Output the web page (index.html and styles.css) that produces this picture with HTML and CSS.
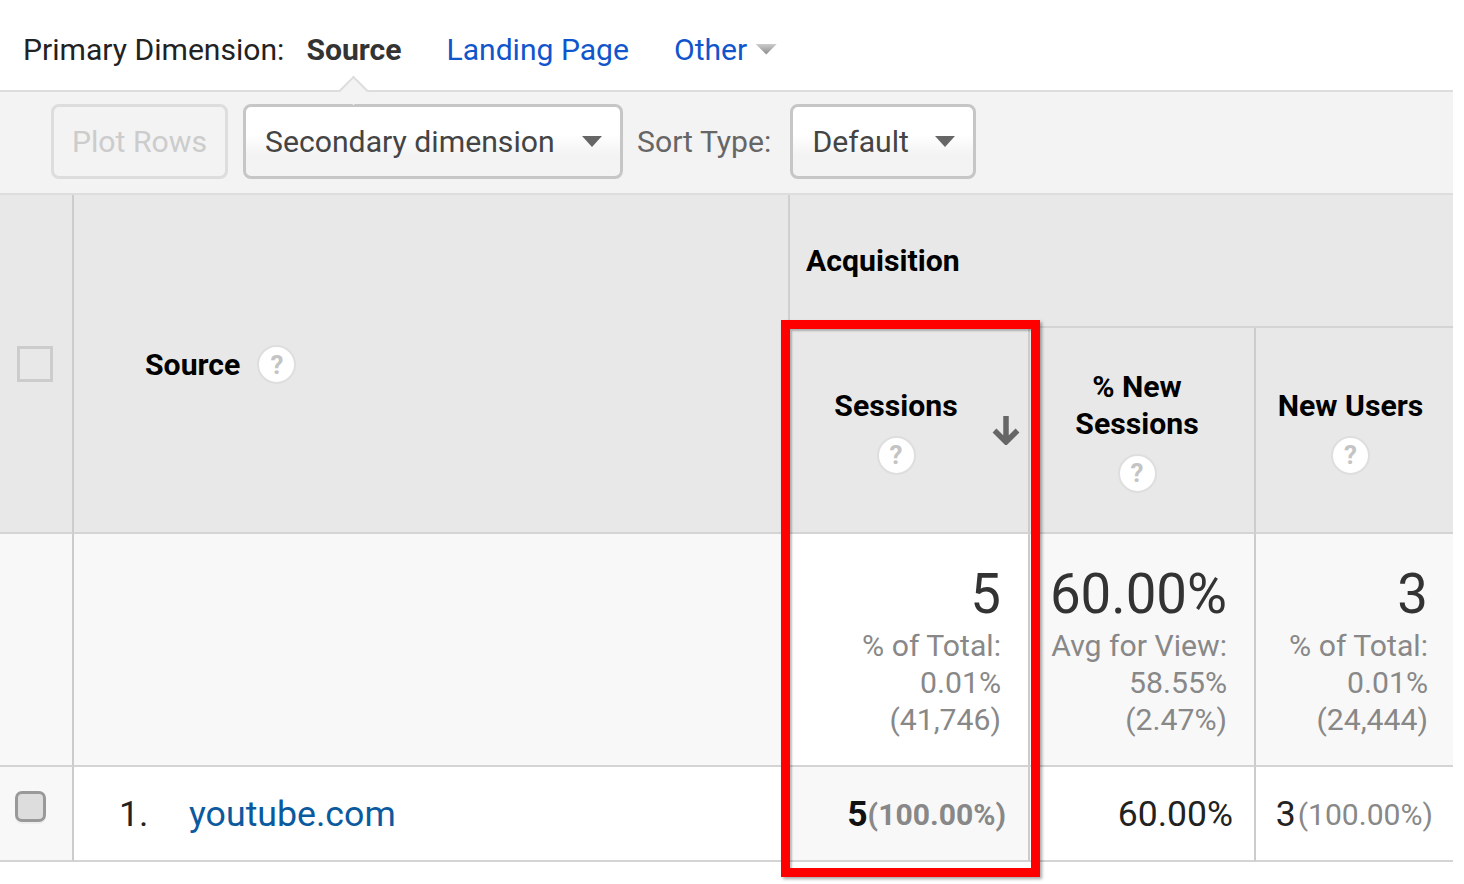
FILE: index.html
```html
<!DOCTYPE html>
<html lang="en">
<head>
<meta charset="utf-8">
<title>Primary Dimension: Source</title>
<link rel="stylesheet" href="styles.css">
</head>
<body>
<div class="report">
  <nav class="dims">
    <span class="dims-label">Primary Dimension:</span>
    <span class="dim-active">Source<i class="notch"></i></span>
    <a class="dim-link">Landing Page</a>
    <a class="dim-link">Other</a>
    <i class="caret-other"></i>
  </nav>
  <div class="toolbar">
    <button class="btn-disabled">Plot Rows</button>
    <div class="select select-wide"><span>Secondary dimension</span><i class="caret"></i></div>
    <span class="sort-label">Sort Type:</span>
    <div class="select select-sort"><span>Default</span><i class="caret"></i></div>
  </div>
  <div class="table">
    <div class="cell head check-head"><i class="check-empty"></i></div>
    <div class="cell head source-head"><span>Source</span><b class="help">?</b></div>
    <div class="cell head acq-head">Acquisition</div>
    <div class="cell head metric m-sessions">
      <span>Sessions</span><b class="help">?</b>
      <svg class="sort-arrow" viewBox="0 0 28 30" width="28" height="30"><path d="M14 1v25M2.500 15.500L14 27 25.500 15.500" fill="none" stroke="#666" stroke-width="5.500"/></svg>
    </div>
    <div class="cell head metric m-new"><span>% New<br>Sessions</span><b class="help">?</b></div>
    <div class="cell head metric m-users"><span>New Users</span><b class="help">?</b></div>

    <div class="cell sum sum-check"></div>
    <div class="cell sum sum-source"></div>
    <div class="cell sum sum-on"><div class="big">5</div><div class="sub">% of Total:<br>0.01%<br>(41,746)</div></div>
    <div class="cell sum sum-b"><div class="big">60.00%</div><div class="sub">Avg for View:<br>58.55%<br>(2.47%)</div></div>
    <div class="cell sum sum-c"><div class="big">3</div><div class="sub">% of Total:<br>0.01%<br>(24,444)</div></div>

    <div class="cell row row-check"><i class="check"></i></div>
    <div class="cell row row-source"><span class="num">1.</span><a class="site">youtube.com</a></div>
    <div class="cell row row-on"><b>5</b><span class="pct">(100.00%)</span></div>
    <div class="cell row row-b">60.00%</div>
    <div class="cell row row-c">3<span class="pct-light">(100.00%)</span></div>
  </div>
  <div class="highlight"></div>
</div>
</body>
</html>
```
FILE: styles.css
```css
* { box-sizing: border-box; }
html, body { margin: 0; background: #fff; }
body { font-family: Roboto, "Liberation Sans", sans-serif; color: #000; overflow: hidden; }
.report { position: relative; width: 1453px; height: 884px; }

.dims { height: 90px; display: flex; align-items: center; padding: 9px 0 0 23px; font-size: 30.100px; white-space: nowrap; }
.dims-label { color: #222; margin-right: 22px; }
.dim-active { position: relative; font-weight: 700; color: #333; margin-right: 45px; }
.dim-link { color: #1155cc; margin-right: 45px; }
.dim-link:last-of-type { margin-right: 8px; }
.notch { position: absolute; left: 37px; top: 48px; width: 21px; height: 21px; background: #f3f3f3; border: 2px solid #ddd; border-right: 0; border-bottom: 0; transform: rotate(45deg); z-index: 1; }
.caret-other { width: 22px; height: 11px; background: linear-gradient(#ccc, #888); clip-path: polygon(0 0, 100% 0, 50% 100%); margin-top: -1px; }

.toolbar { position: relative; height: 105px; background: #f3f3f3; border-top: 2px solid #ddd; border-bottom: 2px solid #ddd; display: flex; align-items: center; padding: 0 0 2px 51px; }
.btn-disabled { width: 177px; height: 75px; padding: 0; background: #f3f3f3; border: 3px solid #ddd; border-radius: 8px; font: 400 30.200px Roboto, sans-serif; color: #ccc; margin-right: 15px; }
.select { height: 75px; border: 3px solid #c6c6c6; border-radius: 8px; background: linear-gradient(#fff 0 40%, #f3f3f3 70%); display: flex; align-items: center; justify-content: space-between; font-size: 30.200px; color: #444; }
.select-wide { width: 380px; padding: 0 18px 0 19px; margin-right: 14px; }
.select-sort { width: 186px; padding: 0 18px 0 19px; }
.sort-label { font-size: 30.200px; color: #666; margin-right: 19px; }
.caret { width: 0; height: 0; border-left: 10px solid transparent; border-right: 10px solid transparent; border-top: 11px solid #666; }

.table { display: grid; grid-template-columns: 74px 716px 240px 226px 197px; grid-template-rows: 133px 206px 233px 95px; }
.cell { border-bottom: 2px solid #d4d4d4; border-right: 2px solid #ccc; }
.head { background: #e8e8e8; font-size: 30.200px; font-weight: 700; }
.check-head { grid-row: 1 / 3; display: flex; align-items: center; padding: 0 0 0 17px; }
.check-empty { display: block; width: 36px; height: 36px; border: 3px solid #ccc; }
.source-head { grid-row: 1 / 3; display: flex; align-items: center; gap: 17px; padding: 2px 0 0 71px; border-right-color: #d0d0d0; }
.acq-head { grid-column: 3 / 6; padding: 48px 0 0 16px; border-right: 0; }
.help { display: flex; flex: none; align-items: center; justify-content: center; width: 39px; height: 39px; border-radius: 50%; background: #fff; border: 2px solid #dedede; color: #c4c4c4; font-size: 26px; font-weight: 700; }
.metric { position: relative; display: flex; flex-direction: column; align-items: center; gap: 12px; text-align: center; line-height: 37px; }
.m-sessions { padding: 59px 26px 0 0; }
.m-new { padding: 40px 10px 0 0; }
.m-users { padding: 59px 8px 0 0; border-right: 0; }
.sort-arrow { position: absolute; right: 8px; top: 87px; }

.sum { background: #f8f8f8; text-align: right; padding: 27px 27px 0 0; }
.sum-on { background: #fff; }
.sum-c { border-right: 0; padding-right: 25px; }
.sum-check, .sum-source { padding: 0; }
.big { font-size: 54.600px; line-height: 66px; color: #333; }
.sub { font-size: 30.200px; line-height: 37px; color: #888; }

.row { display: flex; align-items: center; justify-content: flex-end; font-size: 35.500px; padding: 0 21px 0 0; color: #222; }
.row-check { background: #f8f8f8; justify-content: flex-start; padding: 0 0 14px 15px; }
.check { display: block; width: 31px; height: 31px; border: 3px solid #999; border-radius: 7px; background: #ddd; box-shadow: 0 2px 0 #eee; }
.row-source { justify-content: flex-start; padding-left: 45px; }
.num { width: 70px; color: #222; }
.site { color: #0b5a9e; font-size: 35.700px; }
.row-on { background: #f8f8f8; padding: 1px 22px 0 0; }
.row-on b { font-weight: 700; color: #111; }
.pct { font-size: 30.100px; font-weight: 700; color: #888; }
.pct-light { font-size: 30.100px; color: #888; margin-left: 2px; }
.row-c { border-right: 0; padding: 1px 20px 0 0; }

.highlight { position: absolute; left: 781px; top: 320px; width: 259px; height: 557px; border: 9.500px solid #f00; box-shadow: 2px 2px 3px rgba(0,0,0,.35), inset 2px 2px 2px rgba(0,0,0,.25); }
```
